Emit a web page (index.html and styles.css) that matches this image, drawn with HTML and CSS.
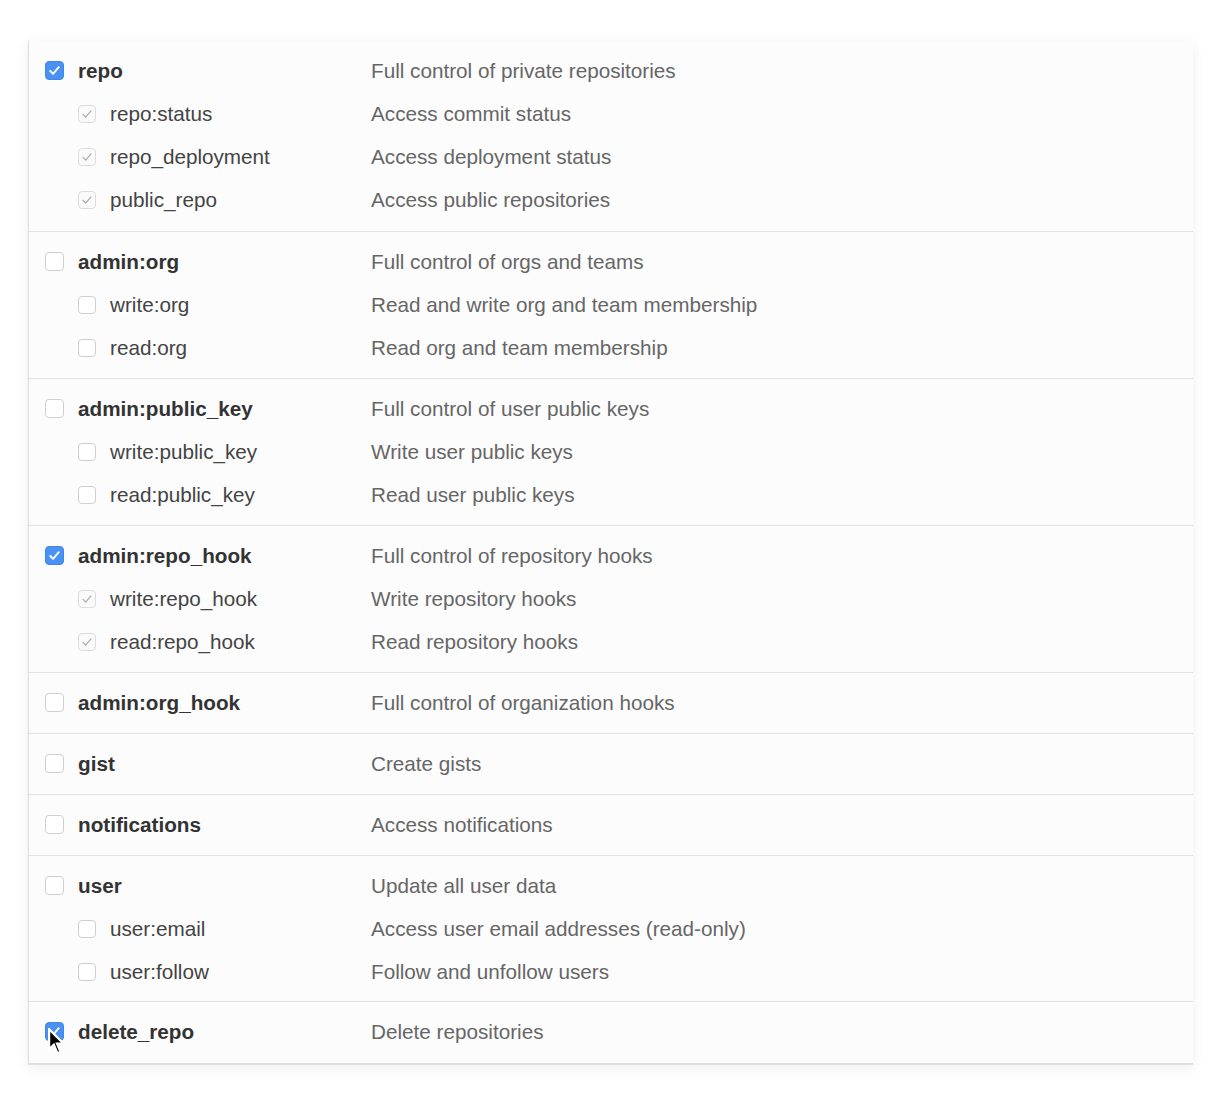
FILE: index.html
```html
<!DOCTYPE html>
<html>
<head>
<meta charset="utf-8">
<link rel="stylesheet" href="styles.css">
</head>
<body>
<div class="panel">
  <div class="group first">
    <div class="row parent"><span class="cb on"><svg viewBox="0 0 18 18"><path d="M4.5 9.5l3 3 6-7"/></svg></span><span class="name">repo</span><span class="desc">Full control of private repositories</span></div>
    <div class="row child"><span class="cb dis"><svg viewBox="0 0 18 18"><path d="M4.5 9.5l3 3 6-7"/></svg></span><span class="name">repo:status</span><span class="desc">Access commit status</span></div>
    <div class="row child"><span class="cb dis"><svg viewBox="0 0 18 18"><path d="M4.5 9.5l3 3 6-7"/></svg></span><span class="name">repo_deployment</span><span class="desc">Access deployment status</span></div>
    <div class="row child"><span class="cb dis"><svg viewBox="0 0 18 18"><path d="M4.5 9.5l3 3 6-7"/></svg></span><span class="name">public_repo</span><span class="desc">Access public repositories</span></div>
  </div>
  <div class="group">
    <div class="row parent"><span class="cb"></span><span class="name">admin:org</span><span class="desc">Full control of orgs and teams</span></div>
    <div class="row child"><span class="cb"></span><span class="name">write:org</span><span class="desc">Read and write org and team membership</span></div>
    <div class="row child"><span class="cb"></span><span class="name">read:org</span><span class="desc">Read org and team membership</span></div>
  </div>
  <div class="group">
    <div class="row parent"><span class="cb"></span><span class="name">admin:public_key</span><span class="desc">Full control of user public keys</span></div>
    <div class="row child"><span class="cb"></span><span class="name">write:public_key</span><span class="desc">Write user public keys</span></div>
    <div class="row child"><span class="cb"></span><span class="name">read:public_key</span><span class="desc">Read user public keys</span></div>
  </div>
  <div class="group">
    <div class="row parent"><span class="cb on"><svg viewBox="0 0 18 18"><path d="M4.5 9.5l3 3 6-7"/></svg></span><span class="name">admin:repo_hook</span><span class="desc">Full control of repository hooks</span></div>
    <div class="row child"><span class="cb dis"><svg viewBox="0 0 18 18"><path d="M4.5 9.5l3 3 6-7"/></svg></span><span class="name">write:repo_hook</span><span class="desc">Write repository hooks</span></div>
    <div class="row child"><span class="cb dis"><svg viewBox="0 0 18 18"><path d="M4.5 9.5l3 3 6-7"/></svg></span><span class="name">read:repo_hook</span><span class="desc">Read repository hooks</span></div>
  </div>
  <div class="group">
    <div class="row parent"><span class="cb"></span><span class="name">admin:org_hook</span><span class="desc">Full control of organization hooks</span></div>
  </div>
  <div class="group">
    <div class="row parent"><span class="cb"></span><span class="name">gist</span><span class="desc">Create gists</span></div>
  </div>
  <div class="group">
    <div class="row parent"><span class="cb"></span><span class="name">notifications</span><span class="desc">Access notifications</span></div>
  </div>
  <div class="group user">
    <div class="row parent"><span class="cb"></span><span class="name">user</span><span class="desc">Update all user data</span></div>
    <div class="row child"><span class="cb"></span><span class="name">user:email</span><span class="desc">Access user email addresses (read-only)</span></div>
    <div class="row child"><span class="cb"></span><span class="name">user:follow</span><span class="desc">Follow and unfollow users</span></div>
  </div>
  <div class="group last">
    <div class="row parent"><span class="cb on"><svg viewBox="0 0 18 18"><path d="M4.5 9.5l3 3 6-7"/></svg><svg class="cursor" viewBox="0 0 17 25"><path d="M1 1 L1 19 L5.2 15 L8.4 22.6 L11.2 21.4 L8.1 14 L14 14 Z"/></svg></span><span class="name">delete_repo</span><span class="desc">Delete repositories</span></div>
  </div>
</div>
</body>
</html>
```
FILE: styles.css
```css
html, body {
  margin: 0;
  padding: 0;
  background: #ffffff;
}

body {
  font-family: "Liberation Sans", Arial, Helvetica, sans-serif;
  font-size: 20.7px;
  color: #333;
  padding-top: 41px;
  height: 1112px;
  box-sizing: border-box;
}

.panel {
  margin-left: 28px;
  width: 1164px;
  background: #fcfcfc;
  border-left: 1px solid #dcdcdc;
  box-shadow: 0 3px 12px rgba(0, 0, 0, 0.07);
}

.group {
  padding: 9px 0 8px;
  border-bottom: 1px solid #e2e2e2;
}

.group.first {
  padding-bottom: 9px;
}

.group.user {
  padding-bottom: 7px;
}

.group.last {
  padding-bottom: 9px;
  border-bottom: 2px solid #e0e0e0;
}

.row {
  display: grid;
  align-items: center;
  height: 43px;
  box-sizing: border-box;
  padding-bottom: 2px;
}

.row.parent {
  grid-template-columns: 16px 19px 14px 293px 1fr;
}

.row.child {
  grid-template-columns: 49px 18px 14px 261px 1fr;
}

.row .cb {
  grid-column: 2;
}

.row .name {
  grid-column: 4;
  white-space: nowrap;
}

.row .desc {
  grid-column: 5;
  color: #666;
  white-space: nowrap;
}

.parent .name {
  font-weight: bold;
  color: #333;
}

.child .name {
  color: #444;
}

.cb {
  position: relative;
  display: block;
  box-sizing: border-box;
  width: 18px;
  height: 18px;
  border: 1px solid #cfcfcf;
  border-radius: 4px;
  background: #fff;
}

.parent .cb {
  width: 19px;
  height: 19px;
}

.cb svg {
  display: block;
  width: 100%;
  height: 100%;
  fill: none;
  stroke-linecap: round;
  stroke-linejoin: round;
}

.cb.on {
  background: #4a92f2;
  border-color: #3f88ea;
}

.cb.on svg path {
  stroke: #ffffff;
  stroke-width: 2;
}

.cb.dis {
  border-color: #dddddd;
  background: #fafafa;
}

.cb.dis svg path {
  stroke: #aaaaaa;
  stroke-width: 1.3;
}

.cb .cursor {
  position: absolute;
  left: 2px;
  top: 5px;
  width: 19px;
  height: 28px;
}

.cb .cursor path {
  fill: #000;
  stroke: #fff;
  stroke-width: 1.2;
  stroke-linejoin: miter;
}
```
